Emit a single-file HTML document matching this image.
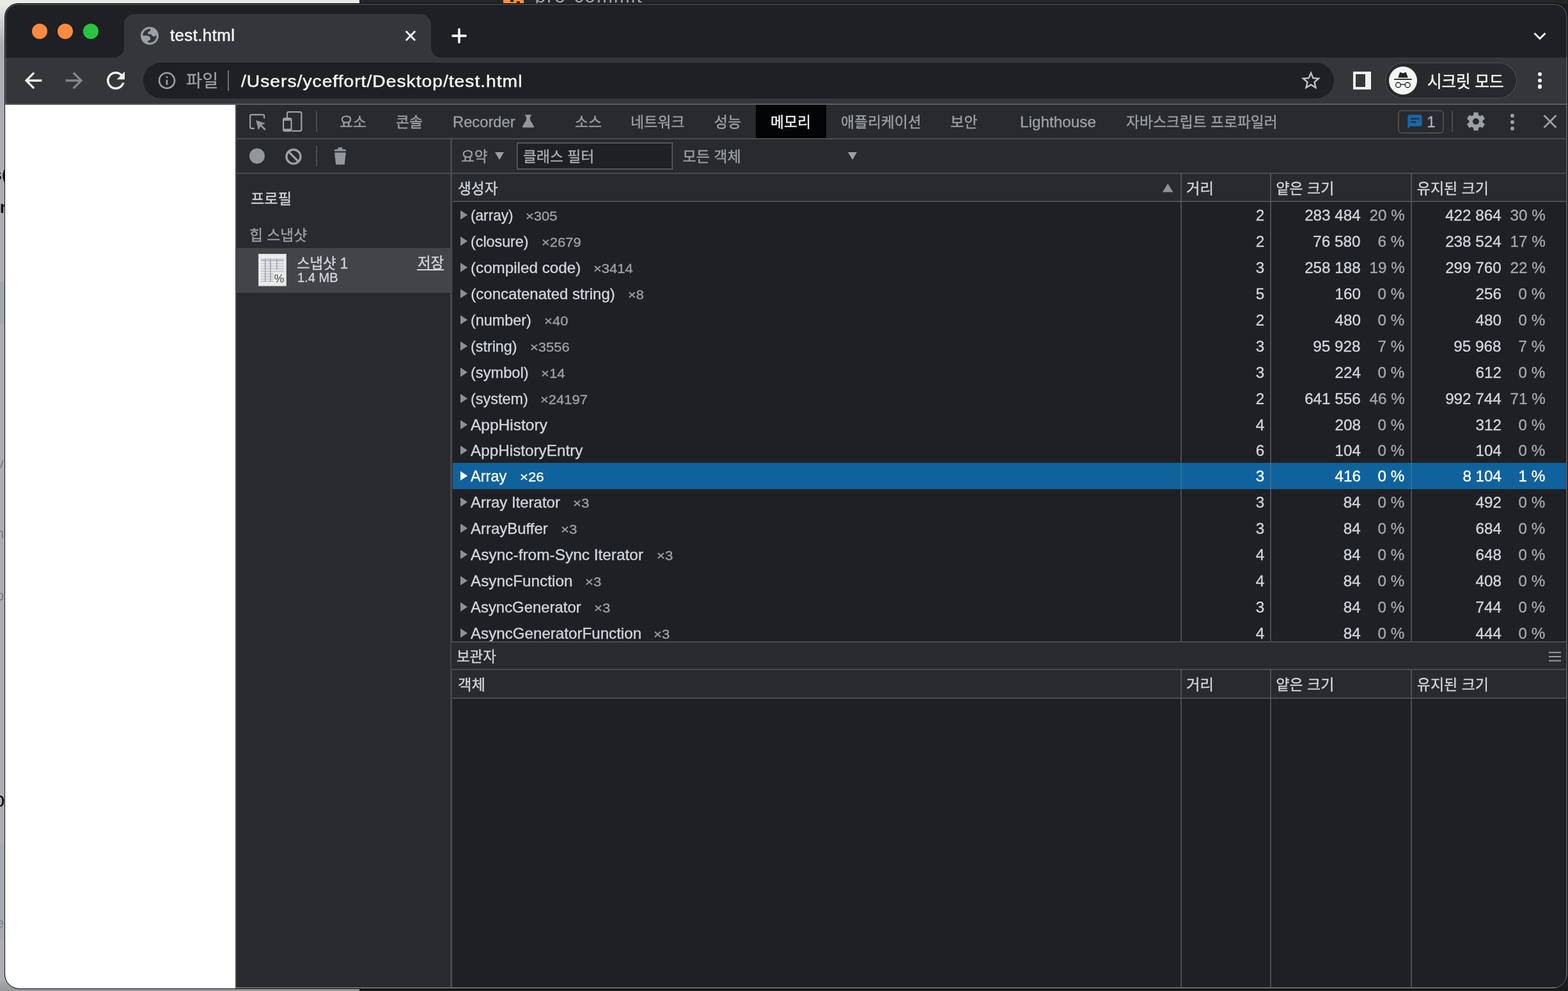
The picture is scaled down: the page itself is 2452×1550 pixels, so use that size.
<!DOCTYPE html>
<html lang="ko"><head><meta charset="utf-8"><title>test.html</title>
<style>
html,body{margin:0;padding:0}
body{width:2452px;height:1550px;overflow:hidden;position:relative;background:#1c1c1f;font-family:"Liberation Sans","Noto Sans CJK KR",sans-serif}
#bg,#win,#o,#rim{position:absolute}
#bg{left:0;top:0;width:2452px;height:1550px;overflow:hidden;will-change:transform}
#bg div,#bg span{position:absolute}
#win{left:8px;top:6px;width:2443px;height:1540px;border-radius:20px 20px 22px 22px;overflow:hidden;background:#1f2024}
#rim{left:7px;top:5px;width:2443px;height:1540px;border-radius:21px 21px 23px 23px;border:1px solid #0c0c0d;pointer-events:none;box-shadow:inset 0 0 0 1.5px rgba(255,255,255,.2)}
#o{left:-8px;top:-6px;width:2452px;height:1550px;will-change:transform}
#o>div,#o>svg,#o>span{position:absolute}
#o>svg{overflow:visible}
.t{white-space:nowrap;-webkit-text-stroke-width:.35px;line-height:40px;transform-origin:0 50%;font-family:"Liberation Sans","Noto Sans CJK KR",sans-serif}
</style></head>
<body>
<div id="bg">
<div style="left:0px;top:0px;width:562px;height:1550px;background:#e9e9e6;"></div>
<div style="left:0px;top:70px;width:40px;height:1480px;background:#adaeb1;"></div>
<div style="left:0px;top:4px;width:40px;height:66px;background:linear-gradient(180deg,#ecece9,#d2d3d4 40%,#adaeb1);"></div>
<div style="left:0px;top:440px;width:8px;height:66px;background:#a3a6ad;"></div>
<div style="left:0px;top:1320px;width:8px;height:150px;background:#a6a9b1;"></div>
<div style="left:0px;top:1530px;width:60px;height:20px;background:linear-gradient(180deg,#adaeb1,#97989b);"></div>
<div style="left:0px;top:1546px;width:562px;height:4px;background:#999a9d;"></div>
<div style="left:562px;top:0px;width:1890px;height:6px;background:#242528;"></div>
<div style="left:562px;top:1546px;width:1890px;height:4px;background:#1a1a1c;"></div>
<span style="left:-11.5px;top:253.0px;font-size:26px;line-height:40px;color:#111;white-space:nowrap;font-weight:bold;">s(</span>
<span style="left:-7.5px;top:304.0px;font-size:26px;line-height:40px;color:#111;white-space:nowrap;font-weight:bold;">ir</span>
<span style="left:-5px;top:705.4px;font-size:22px;line-height:40px;color:#7b7d82;white-space:nowrap;">v</span>
<span style="left:-6px;top:815.4px;font-size:22px;line-height:40px;color:#7b7d82;white-space:nowrap;">n</span>
<span style="left:-6px;top:912.4px;font-size:22px;line-height:40px;color:#7b7d82;white-space:nowrap;">p</span>
<span style="left:-11px;top:1230.2px;font-size:34px;line-height:40px;color:#111;white-space:nowrap;">o</span>
<span style="left:-6px;top:1424.4px;font-size:22px;line-height:40px;color:#84868c;white-space:nowrap;">e</span>
<div style="left:787px;top:0px;width:32px;height:5px;background:#ff8f33;"></div>
<div style="left:798px;top:0px;width:5px;height:3px;background:#242528;"></div>
<div style="left:808px;top:2px;width:5px;height:3px;background:#242528;"></div>
<span style="left:836.5px;top:-25.8px;font-size:30px;line-height:40px;color:#a3a6ab;white-space:nowrap;letter-spacing:1.9px;">pre-commit</span>
</div>
<div id="win"><div id="o">
<div style="left:0px;top:0px;width:2452px;height:90px;background:#1f2024;"></div>
<div style="left:50px;top:37px;width:24px;height:24px;background:#fc8b3f;border-radius:50%"></div>
<div style="left:90px;top:37px;width:24px;height:24px;background:#fc8b3f;border-radius:50%"></div>
<div style="left:130px;top:37px;width:24px;height:24px;background:#29c540;border-radius:50%"></div>
<svg style="left:0px;top:0px;" width="2452" height="90" viewBox="0 0 2452 90"><path d="M178 90A16 16 0 0 0 194 74V38A16 16 0 0 1 210 22H658A16 16 0 0 1 674 38V74A16 16 0 0 0 690 90Z" fill="#35363a"/></svg>
<svg style="left:220px;top:42px;" width="28" height="28" viewBox="0 0 28 28"><defs><clipPath id="gc"><circle cx="14" cy="14" r="13"/></clipPath></defs><circle cx="14" cy="14" r="12.4" fill="none" stroke="#9aa0a8" stroke-width="3.2"/><g clip-path="url(#gc)" fill="#9aa0a8"><path d="M15.8 1.5L15.2 5.4Q14.6 7 12.6 7.6Q11 8.6 11.1 10.2Q11.3 11.5 12.8 11.5H15.8Q17 11.6 17.4 13Q18 14.9 20.6 14.9Q23.4 14.8 25 12.6L28 10V0Z"/><path d="M0 13.7H10.6Q12.6 13.9 14 15.6Q15.4 17.6 15.2 19.4Q15 20.6 13.4 21Q11 21.4 10.9 22.8Q11.2 24.2 13.4 25.6L14 28H0Z"/></g></svg>
<span class="t" style="top:35px;font-size:25px;color:#f1f3f4;-webkit-text-stroke-width:.5px;letter-spacing:0.4px;left:266.4px;transform:scaleX(1.0330);">test.html</span>
<svg style="left:632px;top:46px;" width="20" height="20" viewBox="0 0 20 20"><path d="M2.8 2.8L17.2 17.2M17.2 2.8L2.8 17.2" stroke="#f1f3f4" stroke-width="2.9" fill="none"/></svg>
<svg style="left:704px;top:42px;" width="28" height="28" viewBox="0 0 28 28"><path d="M14 4V24M4 14H24" stroke="#f1f3f4" stroke-width="3.8" stroke-linecap="round" fill="none"/></svg>
<svg style="left:2396px;top:49px;" width="24" height="16" viewBox="0 0 24 16"><path d="M3.5 3L12 11.5L20.5 3" stroke="#f1f3f4" stroke-width="3" fill="none"/></svg>
<div style="left:0px;top:90px;width:2452px;height:72px;background:#35363a;"></div>
<div style="left:0px;top:162px;width:2452px;height:2px;background:#5a5c60;"></div>
<svg style="left:32px;top:106px;" width="40" height="40" viewBox="0 0 24 24"><path fill="#f1f3f4" d="M20 11H7.83l5.59-5.59L12 4l-8 8 8 8 1.41-1.41L7.83 13H20v-2z"/></svg>
<svg style="left:96px;top:106px;" width="40" height="40" viewBox="0 0 24 24"><path fill="#84878b" d="M12 4l-1.41 1.41L16.17 11H4v2h12.17l-5.58 5.59L12 20l8-8z"/></svg>
<svg style="left:160px;top:105px;" width="42" height="42" viewBox="0 0 24 24"><path fill="#f1f3f4" d="M17.65 6.35C16.2 4.9 14.21 4 12 4c-4.42 0-7.99 3.58-7.99 8s3.57 8 7.99 8c3.73 0 6.84-2.55 7.73-6h-2.08c-.82 2.33-3.04 4-5.65 4-3.31 0-6-2.69-6-6s2.69-6 6-6c1.66 0 3.14.69 4.22 1.78L13 11h7V4l-2.35 2.35z"/></svg>
<div style="left:224px;top:98px;width:1862px;height:56px;background:#1f2023;border-radius:28px"></div>
<svg style="left:244.6px;top:110.3px;" width="32" height="32" viewBox="0 0 24 24"><path fill="#9aa0a6" d="M11 7h2v2h-2zm0 4h2v6h-2zm1-9C6.48 2 2 6.48 2 12s4.48 10 10 10 10-4.48 10-10S17.52 2 12 2zm0 18c-4.41 0-8-3.59-8-8s3.59-8 8-8 8 3.59 8 8-3.59 8-8 8z"/></svg>
<span class="t" style="top:107px;font-size:27.5px;color:#9aa0a6;left:291.01px;transform:scaleX(0.9935);">파일</span>
<div style="left:356px;top:110px;width:2px;height:32px;background:#6a6d71;"></div>
<span class="t" style="top:107px;font-size:26.5px;color:#f1f3f4;-webkit-text-stroke-width:.5px;letter-spacing:0.9px;left:376.5px;transform:scaleX(1.0686);">/Users/yceffort/Desktop/test.html</span>
<svg style="left:2031.7px;top:108px;" width="36" height="36" viewBox="0 0 24 24"><path fill="#bdc3c9" d="M22 9.24l-7.19-.62L12 2 9.19 8.63 2 9.24l5.46 4.73L5.82 21 12 17.27 18.18 21l-1.63-7.03L22 9.24zM12 15.4l-3.76 2.27 1-4.28-3.32-2.88 4.38-.38L12 6.1l1.71 4.04 4.38.38-3.32 2.88 1 4.28L12 15.4z"/></svg>
<div style="left:2116px;top:112px;width:28px;height:28px;background:#f1f3f4;"></div>
<div style="left:2120px;top:116px;width:15px;height:20px;background:#35363a;"></div>
<div style="left:2167px;top:99px;width:204px;height:54px;background:#28292c;border-radius:27px;box-shadow:0 0 0 1px rgba(255,255,255,.13)"></div>
<div style="left:2172px;top:104px;width:44px;height:44px;background:#f4f5f5;border-radius:50%"></div>
<svg style="left:2172px;top:104px;" width="44" height="44" viewBox="0 0 44 44"><path fill="#222326" d="M14.2 17.6L17 9.6Q17.3 8.9 18 9.1L20.4 9.9Q22 10.4 23.6 9.9L26 9.1Q26.7 8.9 27 9.6L29.8 17.6Z"/><rect x="8.2" y="19.2" width="27.5" height="1.8" fill="#222326"/><g fill="none" stroke="#222326" stroke-width="1.4"><circle cx="14.5" cy="28.9" r="3.9"/><circle cx="29.2" cy="28.9" r="3.9"/><path d="M18.3 28.1H25.4"/></g></svg>
<span class="t" style="top:108px;font-size:26.5px;color:#f4f5f6;-webkit-text-stroke-width:.5px;left:2231.88px;transform:scaleX(0.9243);">시크릿 모드</span>
<div style="left:2404.6px;top:112.9px;width:6.2px;height:6.2px;background:#f1f3f4;border-radius:50%"></div>
<div style="left:2404.6px;top:122.7px;width:6.2px;height:6.2px;background:#f1f3f4;border-radius:50%"></div>
<div style="left:2404.6px;top:132.4px;width:6.2px;height:6.2px;background:#f1f3f4;border-radius:50%"></div>
<div style="left:0px;top:164px;width:368px;height:1400px;background:#ffffff;"></div>
<div style="left:368px;top:164px;width:2100px;height:1400px;background:#292a2d;"></div>
<div style="left:368px;top:164px;width:2px;height:1400px;background:#494c50;"></div>
<div style="left:370px;top:216px;width:2100px;height:2px;background:#494c50;"></div>
<div style="left:370px;top:270px;width:2100px;height:2px;background:#494c50;"></div>
<div style="left:704px;top:218px;width:3px;height:1400px;background:#46484c;"></div>
<svg style="left:389px;top:177px;" width="28" height="28" viewBox="0 0 28 28"><path d="M9 23.8H4.4Q2.2 23.8 2.2 21.6V4.6Q2.2 2.4 4.4 2.4H22Q24.2 2.4 24.2 4.6V8.4" fill="none" stroke="#9aa0a6" stroke-width="2.2"/><path d="M11.2 11L26 16L20.4 18.6L26.8 25L24.8 27L18.4 20.6L15.2 26.4Z" fill="#92979d"/></svg>
<svg style="left:441px;top:173px;" width="32" height="34" viewBox="0 0 32 34"><path d="M8 11.8V4.6Q8 2.2 10.4 2.2H28Q30.4 2.2 30.4 4.6V29.4Q30.4 31.8 28 31.8H15.6" fill="none" stroke="#9aa0a6" stroke-width="2.2"/><rect x="2.1" y="12.1" width="12.4" height="19.8" rx="2" fill="none" stroke="#9aa0a6" stroke-width="2.2"/><rect x="2.1" y="12.1" width="12.4" height="3.6" rx="1" fill="#9aa0a6"/><rect x="2.1" y="28.4" width="12.4" height="3.5" fill="#9aa0a6"/></svg>
<div style="left:494px;top:174px;width:2px;height:32px;background:#494c50;"></div>
<span class="t" style="top:171px;font-size:23px;color:#9aa0a6;left:531px;transform:scaleX(0.9958);">요소</span>
<span class="t" style="top:171px;font-size:23px;color:#9aa0a6;left:619px;transform:scaleX(0.9958);">콘솔</span>
<span class="t" style="top:171px;font-size:24px;color:#9aa0a6;left:707.61px;transform:scaleX(0.9885);">Recorder</span>
<svg style="left:816px;top:179px;" width="20" height="21" viewBox="0 0 20 21"><path d="M5.2 0.6H14.8V3H12.9V8.6L19 18.4Q19.6 20.2 17.6 20.4H2.4Q0.4 20.2 1 18.4L7.1 8.6V3H5.2Z" fill="#92979d"/></svg>
<span class="t" style="top:171px;font-size:23px;color:#9aa0a6;left:899px;transform:scaleX(0.9958);">소스</span>
<span class="t" style="top:171px;font-size:23px;color:#9aa0a6;left:986px;">네트워크</span>
<span class="t" style="top:171px;font-size:23px;color:#9aa0a6;left:1116.8px;">성능</span>
<div style="left:1182px;top:164px;width:110px;height:52px;background:#030405;"></div>
<span class="t" style="top:171px;font-size:23px;color:#f1f3f4;left:1204.81px;transform:scaleX(0.9913);">메모리</span>
<span class="t" style="top:171px;font-size:23px;color:#9aa0a6;left:1314.81px;transform:scaleX(0.9902);">애플리케이션</span>
<span class="t" style="top:171px;font-size:23px;color:#9aa0a6;left:1486.3px;">보안</span>
<span class="t" style="top:171px;font-size:24px;color:#9aa0a6;left:1594.79px;transform:scaleX(1.0130);">Lighthouse</span>
<span class="t" style="top:171px;font-size:23px;color:#9aa0a6;left:1760.6px;transform:scaleX(0.9899);">자바스크립트 프로파일러</span>
<div style="left:2186px;top:172px;width:72px;height:37px;background:transparent;box-sizing:border-box;border:2px solid #494c50;border-radius:6px"></div>
<svg style="left:2200.6px;top:178.6px;" width="23" height="23" viewBox="0 0 23 23"><path d="M0.4 22.6V3.4Q0.4 0.4 3.4 0.4H19.6Q22.6 0.4 22.6 3.4V15.6Q22.6 18.6 19.6 18.6H4.4Z" fill="#1a67a6"/><rect x="5" y="5.6" width="13.4" height="2.2" fill="#292a2d"/><rect x="5" y="10.6" width="8.6" height="2.2" fill="#292a2d"/></svg>
<span class="t" style="top:171px;font-size:24px;color:#aeb2b8;left:2231.2px;">1</span>
<div style="left:2270px;top:174px;width:2px;height:32px;background:#494c50;"></div>
<svg style="left:2291px;top:173px;" width="34" height="34" viewBox="0 0 24 24"><path fill="#9aa0a6" d="M19.43 12.98c.04-.32.07-.64.07-.98s-.03-.66-.07-.98l2.11-1.65c.19-.15.24-.42.12-.64l-2-3.46c-.12-.22-.39-.3-.61-.22l-2.49 1c-.52-.4-1.08-.73-1.69-.98l-.38-2.65C14.46 2.18 14.25 2 14 2h-4c-.25 0-.46.18-.49.42l-.38 2.65c-.61.25-1.17.59-1.69.98l-2.49-1c-.23-.09-.49 0-.61.22l-2 3.46c-.13.22-.07.49.12.64l2.11 1.65c-.04.32-.07.65-.07.98s.03.66.07.98l-2.11 1.65c-.19.15-.24.42-.12.64l2 3.46c.12.22.39.3.61.22l2.49-1c.52.4 1.08.73 1.69.98l.38 2.65c.03.24.24.42.49.42h4c.25 0 .46-.18.49-.42l.38-2.65c.61-.25 1.17-.59 1.69-.98l2.49 1c.23.09.49 0 .61-.22l2-3.46c.12-.22.07-.49-.12-.64l-2.11-1.65zM12 15.5c-1.93 0-3.5-1.57-3.5-3.5s1.57-3.5 3.5-3.5 3.5 1.57 3.5 3.5-1.57 3.5-3.5 3.5z"/></svg>
<div style="left:2361.8px;top:177.8px;width:6.4px;height:6.4px;background:#9aa0a6;border-radius:50%"></div>
<div style="left:2361.8px;top:187.8px;width:6.4px;height:6.4px;background:#9aa0a6;border-radius:50%"></div>
<div style="left:2361.8px;top:197.8px;width:6.4px;height:6.4px;background:#9aa0a6;border-radius:50%"></div>
<svg style="left:2413px;top:179px;" width="22" height="22" viewBox="0 0 22 22"><path d="M1.6 1.6L20.4 20.4M20.4 1.6L1.6 20.4" stroke="#9aa0a6" stroke-width="2.8" fill="none"/></svg>
<div style="left:390px;top:232px;width:24px;height:24px;background:#92979d;border-radius:50%"></div>
<svg style="left:445.8px;top:232px;" width="26" height="26" viewBox="0 0 26 26"><circle cx="13" cy="13" r="11" fill="none" stroke="#9aa0a6" stroke-width="3.4"/><path d="M5.4 5.4L20.6 20.6" stroke="#9aa0a6" stroke-width="3.4"/></svg>
<div style="left:494px;top:228px;width:2px;height:32px;background:#494c50;"></div>
<svg style="left:522px;top:230px;" width="20" height="28" viewBox="0 0 20 28"><path d="M0.8 6.6V5.6Q1 3.6 3 3.4H6.6V1.2Q6.8 0.4 7.6 0.4H12.4Q13.2 0.4 13.4 1.2V3.4H17Q19 3.6 19.2 5.6V6.6Z" fill="#92979d"/><path d="M1.2 8.6H18.8L16.8 27.6H3.2Z" fill="#92979d"/></svg>
<span class="t" style="top:225px;font-size:23px;color:#9aa0a6;left:721.41px;transform:scaleX(0.9862);">요약</span>
<svg style="left:774px;top:238px;" width="14" height="12" viewBox="0 0 14 12"><path d="M0 0H14L7 12Z" fill="#9aa0a6"/></svg>
<svg style="left:808px;top:223px;" width="244" height="42" viewBox="0 0 244 42"><rect x="0.7" y="0.7" width="242.6" height="40.6" fill="#1f2024" stroke="#63666b" stroke-width="1.4"/></svg>
<span class="t" style="top:225px;font-size:23px;color:#a9aeb4;left:817.71px;transform:scaleX(0.9904);">클래스 필터</span>
<span class="t" style="top:225px;font-size:23px;color:#9aa0a6;left:1067.6px;">모든 객체</span>
<svg style="left:1326px;top:238px;" width="14" height="12" viewBox="0 0 14 12"><path d="M0 0H14L7 12Z" fill="#9aa0a6"/></svg>
<span class="t" style="top:291px;font-size:23px;color:#d0d5dd;left:391.59px;transform:scaleX(1.0079);">프로필</span>
<span class="t" style="top:348px;font-size:23px;color:#9aa0a6;left:389.61px;transform:scaleX(0.9903);">힙 스냅샷</span>
<div style="left:370px;top:388px;width:334px;height:70px;background:#434448;"></div>
<svg style="left:404px;top:397.4px;" width="44" height="50.6" viewBox="0 0 44 50.6"><rect x="0" y="0" width="44" height="50.6" fill="#c9ced8"/><rect x="0.8" y="0.8" width="42" height="48.8" fill="#ecece8"/><rect x="4" y="7.6" width="36" height="4.4" fill="#bcc4d3"/><g stroke="#bcc4d3" stroke-width="1.7"><path d="M4 15.5H40M4 19.5H40M4 23.4H40M4 27.4H40M4 31.4H24M4 35.4H24M4 39.4H24M4 43.2H24"/></g><g stroke="#a4a8ae" stroke-width="1.8"><path d="M10.8 7.4V44M18.9 7.4V44M28.8 7.4V25"/></g><text x="24.6" y="45" font-family="Liberation Sans,sans-serif" font-size="18" font-weight="bold" fill="#75777b">%</text></svg>
<span class="t" style="top:392px;font-size:23px;color:#d0d5dd;left:463.63px;transform:scaleX(0.9693);">스냅샷 1</span>
<span class="t" style="top:414px;font-size:20px;color:#d0d5dd;left:464.59px;transform:scaleX(1.0061);">1.4 MB</span>
<span class="t" style="top:391px;font-size:23px;color:#d0d5dd;left:652.6px;transform:scaleX(0.9747);">저장</span>
<div style="left:652px;top:421.4px;width:42.4px;height:2px;background:#d0d5dd;"></div>
<div style="left:708px;top:272px;width:1800px;height:42px;background:#292a2d;"></div>
<div style="left:708px;top:316px;width:1800px;height:690px;background:#1f2024;"></div>
<svg style="left:719.8px;top:329.09999999999997px;" width="11.2" height="14.6" viewBox="0 0 11.2 14.6"><path d="M0 0L11.2 7.3L0 14.6Z" fill="#8c8f94"/></svg>
<span class="t" style="top:317px;font-size:24px;color:#d0d5dd;left:736.36px;transform:scaleX(0.9421);">(array)</span>
<span class="t" style="top:318px;font-size:20.5px;color:#9aa0a6;left:822.23px;transform:scaleX(1.0718);">×305</span>
<span class="t" style="top:317px;font-size:24px;color:#d0d5dd;right:474.85px;transform-origin:100% 50%;transform:scaleX(1.0100);">2</span>
<span class="t" style="top:317px;font-size:24px;color:#d0d5dd;right:324.35px;transform-origin:100% 50%;transform:scaleX(1.0100);">283 484</span>
<span class="t" style="top:317px;font-size:24px;color:#a4a8ae;right:255.36px;transform-origin:100% 50%;transform:scaleX(1.0100);">20 %</span>
<span class="t" style="top:317px;font-size:24px;color:#d0d5dd;right:104.25px;transform-origin:100% 50%;transform:scaleX(1.0100);">422 864</span>
<span class="t" style="top:317px;font-size:24px;color:#a4a8ae;right:35.36px;transform-origin:100% 50%;transform:scaleX(1.0100);">30 %</span>
<svg style="left:719.8px;top:370.09999999999997px;" width="11.2" height="14.6" viewBox="0 0 11.2 14.6"><path d="M0 0L11.2 7.3L0 14.6Z" fill="#8c8f94"/></svg>
<span class="t" style="top:358px;font-size:24px;color:#d0d5dd;left:736.33px;transform:scaleX(0.9697);">(closure)</span>
<span class="t" style="top:359px;font-size:20.5px;color:#9aa0a6;left:846.63px;transform:scaleX(1.0716);">×2679</span>
<span class="t" style="top:358px;font-size:24px;color:#d0d5dd;right:474.85px;transform-origin:100% 50%;transform:scaleX(1.0100);">2</span>
<span class="t" style="top:358px;font-size:24px;color:#d0d5dd;right:324.35px;transform-origin:100% 50%;transform:scaleX(1.0100);">76 580</span>
<span class="t" style="top:358px;font-size:24px;color:#a4a8ae;right:255.36px;transform-origin:100% 50%;transform:scaleX(1.0100);">6 %</span>
<span class="t" style="top:358px;font-size:24px;color:#d0d5dd;right:104.25px;transform-origin:100% 50%;transform:scaleX(1.0100);">238 524</span>
<span class="t" style="top:358px;font-size:24px;color:#a4a8ae;right:35.36px;transform-origin:100% 50%;transform:scaleX(1.0100);">17 %</span>
<svg style="left:719.8px;top:411.09999999999997px;" width="11.2" height="14.6" viewBox="0 0 11.2 14.6"><path d="M0 0L11.2 7.3L0 14.6Z" fill="#8c8f94"/></svg>
<span class="t" style="top:399px;font-size:24px;color:#d0d5dd;left:736.29px;transform:scaleX(1.0085);">(compiled code)</span>
<span class="t" style="top:400px;font-size:20.5px;color:#9aa0a6;left:928.13px;transform:scaleX(1.0734);">×3414</span>
<span class="t" style="top:399px;font-size:24px;color:#d0d5dd;right:474.85px;transform-origin:100% 50%;transform:scaleX(1.0100);">3</span>
<span class="t" style="top:399px;font-size:24px;color:#d0d5dd;right:324.35px;transform-origin:100% 50%;transform:scaleX(1.0100);">258 188</span>
<span class="t" style="top:399px;font-size:24px;color:#a4a8ae;right:255.36px;transform-origin:100% 50%;transform:scaleX(1.0100);">19 %</span>
<span class="t" style="top:399px;font-size:24px;color:#d0d5dd;right:104.25px;transform-origin:100% 50%;transform:scaleX(1.0100);">299 760</span>
<span class="t" style="top:399px;font-size:24px;color:#a4a8ae;right:35.36px;transform-origin:100% 50%;transform:scaleX(1.0100);">22 %</span>
<svg style="left:719.8px;top:452.09999999999997px;" width="11.2" height="14.6" viewBox="0 0 11.2 14.6"><path d="M0 0L11.2 7.3L0 14.6Z" fill="#8c8f94"/></svg>
<span class="t" style="top:440px;font-size:24px;color:#d0d5dd;left:736.3px;">(concatenated string)</span>
<span class="t" style="top:441px;font-size:20.5px;color:#9aa0a6;left:982.44px;transform:scaleX(1.0649);">×8</span>
<span class="t" style="top:440px;font-size:24px;color:#d0d5dd;right:474.85px;transform-origin:100% 50%;transform:scaleX(1.0100);">5</span>
<span class="t" style="top:440px;font-size:24px;color:#d0d5dd;right:324.35px;transform-origin:100% 50%;transform:scaleX(1.0100);">160</span>
<span class="t" style="top:440px;font-size:24px;color:#a4a8ae;right:255.36px;transform-origin:100% 50%;transform:scaleX(1.0100);">0 %</span>
<span class="t" style="top:440px;font-size:24px;color:#d0d5dd;right:104.25px;transform-origin:100% 50%;transform:scaleX(1.0100);">256</span>
<span class="t" style="top:440px;font-size:24px;color:#a4a8ae;right:35.36px;transform-origin:100% 50%;transform:scaleX(1.0100);">0 %</span>
<svg style="left:719.8px;top:493.09999999999997px;" width="11.2" height="14.6" viewBox="0 0 11.2 14.6"><path d="M0 0L11.2 7.3L0 14.6Z" fill="#8c8f94"/></svg>
<span class="t" style="top:481px;font-size:24px;color:#d0d5dd;left:736.33px;transform:scaleX(0.9731);">(number)</span>
<span class="t" style="top:482px;font-size:20.5px;color:#9aa0a6;left:850.92px;transform:scaleX(1.0755);">×40</span>
<span class="t" style="top:481px;font-size:24px;color:#d0d5dd;right:474.85px;transform-origin:100% 50%;transform:scaleX(1.0100);">2</span>
<span class="t" style="top:481px;font-size:24px;color:#d0d5dd;right:324.35px;transform-origin:100% 50%;transform:scaleX(1.0100);">480</span>
<span class="t" style="top:481px;font-size:24px;color:#a4a8ae;right:255.36px;transform-origin:100% 50%;transform:scaleX(1.0100);">0 %</span>
<span class="t" style="top:481px;font-size:24px;color:#d0d5dd;right:104.25px;transform-origin:100% 50%;transform:scaleX(1.0100);">480</span>
<span class="t" style="top:481px;font-size:24px;color:#a4a8ae;right:35.36px;transform-origin:100% 50%;transform:scaleX(1.0100);">0 %</span>
<svg style="left:719.8px;top:534.1px;" width="11.2" height="14.6" viewBox="0 0 11.2 14.6"><path d="M0 0L11.2 7.3L0 14.6Z" fill="#8c8f94"/></svg>
<span class="t" style="top:522px;font-size:24px;color:#d0d5dd;left:736.33px;transform:scaleX(0.9714);">(string)</span>
<span class="t" style="top:523px;font-size:20.5px;color:#9aa0a6;left:828.73px;transform:scaleX(1.0698);">×3556</span>
<span class="t" style="top:522px;font-size:24px;color:#d0d5dd;right:474.85px;transform-origin:100% 50%;transform:scaleX(1.0100);">3</span>
<span class="t" style="top:522px;font-size:24px;color:#d0d5dd;right:324.35px;transform-origin:100% 50%;transform:scaleX(1.0100);">95 928</span>
<span class="t" style="top:522px;font-size:24px;color:#a4a8ae;right:255.36px;transform-origin:100% 50%;transform:scaleX(1.0100);">7 %</span>
<span class="t" style="top:522px;font-size:24px;color:#d0d5dd;right:104.25px;transform-origin:100% 50%;transform:scaleX(1.0100);">95 968</span>
<span class="t" style="top:522px;font-size:24px;color:#a4a8ae;right:35.36px;transform-origin:100% 50%;transform:scaleX(1.0100);">7 %</span>
<svg style="left:719.8px;top:575.1px;" width="11.2" height="14.6" viewBox="0 0 11.2 14.6"><path d="M0 0L11.2 7.3L0 14.6Z" fill="#8c8f94"/></svg>
<span class="t" style="top:563px;font-size:24px;color:#d0d5dd;left:736.32px;transform:scaleX(0.9842);">(symbol)</span>
<span class="t" style="top:564px;font-size:20.5px;color:#9aa0a6;left:846.12px;transform:scaleX(1.0815);">×14</span>
<span class="t" style="top:563px;font-size:24px;color:#d0d5dd;right:474.85px;transform-origin:100% 50%;transform:scaleX(1.0100);">3</span>
<span class="t" style="top:563px;font-size:24px;color:#d0d5dd;right:324.35px;transform-origin:100% 50%;transform:scaleX(1.0100);">224</span>
<span class="t" style="top:563px;font-size:24px;color:#a4a8ae;right:255.36px;transform-origin:100% 50%;transform:scaleX(1.0100);">0 %</span>
<span class="t" style="top:563px;font-size:24px;color:#d0d5dd;right:104.25px;transform-origin:100% 50%;transform:scaleX(1.0100);">612</span>
<span class="t" style="top:563px;font-size:24px;color:#a4a8ae;right:35.36px;transform-origin:100% 50%;transform:scaleX(1.0100);">0 %</span>
<svg style="left:719.8px;top:616.1px;" width="11.2" height="14.6" viewBox="0 0 11.2 14.6"><path d="M0 0L11.2 7.3L0 14.6Z" fill="#8c8f94"/></svg>
<span class="t" style="top:604px;font-size:24px;color:#d0d5dd;left:736.32px;transform:scaleX(0.9766);">(system)</span>
<span class="t" style="top:605px;font-size:20.5px;color:#9aa0a6;left:845.43px;transform:scaleX(1.0742);">×24197</span>
<span class="t" style="top:604px;font-size:24px;color:#d0d5dd;right:474.85px;transform-origin:100% 50%;transform:scaleX(1.0100);">2</span>
<span class="t" style="top:604px;font-size:24px;color:#d0d5dd;right:324.35px;transform-origin:100% 50%;transform:scaleX(1.0100);">641 556</span>
<span class="t" style="top:604px;font-size:24px;color:#a4a8ae;right:255.36px;transform-origin:100% 50%;transform:scaleX(1.0100);">46 %</span>
<span class="t" style="top:604px;font-size:24px;color:#d0d5dd;right:104.25px;transform-origin:100% 50%;transform:scaleX(1.0100);">992 744</span>
<span class="t" style="top:604px;font-size:24px;color:#a4a8ae;right:35.36px;transform-origin:100% 50%;transform:scaleX(1.0100);">71 %</span>
<svg style="left:719.8px;top:657.1px;" width="11.2" height="14.6" viewBox="0 0 11.2 14.6"><path d="M0 0L11.2 7.3L0 14.6Z" fill="#8c8f94"/></svg>
<span class="t" style="top:645px;font-size:24px;color:#d0d5dd;left:735.9px;transform:scaleX(1.0215);">AppHistory</span>
<span class="t" style="top:645px;font-size:24px;color:#d0d5dd;right:474.85px;transform-origin:100% 50%;transform:scaleX(1.0100);">4</span>
<span class="t" style="top:645px;font-size:24px;color:#d0d5dd;right:324.35px;transform-origin:100% 50%;transform:scaleX(1.0100);">208</span>
<span class="t" style="top:645px;font-size:24px;color:#a4a8ae;right:255.36px;transform-origin:100% 50%;transform:scaleX(1.0100);">0 %</span>
<span class="t" style="top:645px;font-size:24px;color:#d0d5dd;right:104.25px;transform-origin:100% 50%;transform:scaleX(1.0100);">312</span>
<span class="t" style="top:645px;font-size:24px;color:#a4a8ae;right:35.36px;transform-origin:100% 50%;transform:scaleX(1.0100);">0 %</span>
<svg style="left:719.8px;top:697.1px;" width="11.2" height="14.6" viewBox="0 0 11.2 14.6"><path d="M0 0L11.2 7.3L0 14.6Z" fill="#8c8f94"/></svg>
<span class="t" style="top:685px;font-size:24px;color:#d0d5dd;left:735.9px;transform:scaleX(1.0116);">AppHistoryEntry</span>
<span class="t" style="top:685px;font-size:24px;color:#d0d5dd;right:474.85px;transform-origin:100% 50%;transform:scaleX(1.0100);">6</span>
<span class="t" style="top:685px;font-size:24px;color:#d0d5dd;right:324.35px;transform-origin:100% 50%;transform:scaleX(1.0100);">104</span>
<span class="t" style="top:685px;font-size:24px;color:#a4a8ae;right:255.36px;transform-origin:100% 50%;transform:scaleX(1.0100);">0 %</span>
<span class="t" style="top:685px;font-size:24px;color:#d0d5dd;right:104.25px;transform-origin:100% 50%;transform:scaleX(1.0100);">104</span>
<span class="t" style="top:685px;font-size:24px;color:#a4a8ae;right:35.36px;transform-origin:100% 50%;transform:scaleX(1.0100);">0 %</span>
<div style="left:708px;top:724px;width:1800px;height:41px;background:#10629d;"></div>
<svg style="left:719.8px;top:737.1px;" width="11.2" height="14.6" viewBox="0 0 11.2 14.6"><path d="M0 0L11.2 7.3L0 14.6Z" fill="#ffffff"/></svg>
<span class="t" style="top:725px;font-size:24px;color:#ffffff;left:735.9px;transform:scaleX(0.9818);">Array</span>
<span class="t" style="top:726px;font-size:20.5px;color:#ffffff;left:812.52px;transform:scaleX(1.0845);">×26</span>
<span class="t" style="top:725px;font-size:24px;color:#ffffff;right:474.85px;transform-origin:100% 50%;transform:scaleX(1.0100);">3</span>
<span class="t" style="top:725px;font-size:24px;color:#ffffff;right:324.35px;transform-origin:100% 50%;transform:scaleX(1.0100);">416</span>
<span class="t" style="top:725px;font-size:24px;color:#ffffff;right:255.36px;transform-origin:100% 50%;transform:scaleX(1.0100);">0 %</span>
<span class="t" style="top:725px;font-size:24px;color:#ffffff;right:104.25px;transform-origin:100% 50%;transform:scaleX(1.0100);">8 104</span>
<span class="t" style="top:725px;font-size:24px;color:#ffffff;right:35.36px;transform-origin:100% 50%;transform:scaleX(1.0100);">1 %</span>
<svg style="left:719.8px;top:778.1px;" width="11.2" height="14.6" viewBox="0 0 11.2 14.6"><path d="M0 0L11.2 7.3L0 14.6Z" fill="#8c8f94"/></svg>
<span class="t" style="top:766px;font-size:24px;color:#d0d5dd;left:735.9px;">Array Iterator</span>
<span class="t" style="top:767px;font-size:20.5px;color:#9aa0a6;left:895.82px;transform:scaleX(1.0831);">×3</span>
<span class="t" style="top:766px;font-size:24px;color:#d0d5dd;right:474.85px;transform-origin:100% 50%;transform:scaleX(1.0100);">3</span>
<span class="t" style="top:766px;font-size:24px;color:#d0d5dd;right:324.35px;transform-origin:100% 50%;transform:scaleX(1.0100);">84</span>
<span class="t" style="top:766px;font-size:24px;color:#a4a8ae;right:255.36px;transform-origin:100% 50%;transform:scaleX(1.0100);">0 %</span>
<span class="t" style="top:766px;font-size:24px;color:#d0d5dd;right:104.25px;transform-origin:100% 50%;transform:scaleX(1.0100);">492</span>
<span class="t" style="top:766px;font-size:24px;color:#a4a8ae;right:35.36px;transform-origin:100% 50%;transform:scaleX(1.0100);">0 %</span>
<svg style="left:719.8px;top:819.1px;" width="11.2" height="14.6" viewBox="0 0 11.2 14.6"><path d="M0 0L11.2 7.3L0 14.6Z" fill="#8c8f94"/></svg>
<span class="t" style="top:807px;font-size:24px;color:#d0d5dd;left:735.9px;">ArrayBuffer</span>
<span class="t" style="top:808px;font-size:20.5px;color:#9aa0a6;left:876.92px;transform:scaleX(1.0831);">×3</span>
<span class="t" style="top:807px;font-size:24px;color:#d0d5dd;right:474.85px;transform-origin:100% 50%;transform:scaleX(1.0100);">3</span>
<span class="t" style="top:807px;font-size:24px;color:#d0d5dd;right:324.35px;transform-origin:100% 50%;transform:scaleX(1.0100);">84</span>
<span class="t" style="top:807px;font-size:24px;color:#a4a8ae;right:255.36px;transform-origin:100% 50%;transform:scaleX(1.0100);">0 %</span>
<span class="t" style="top:807px;font-size:24px;color:#d0d5dd;right:104.25px;transform-origin:100% 50%;transform:scaleX(1.0100);">684</span>
<span class="t" style="top:807px;font-size:24px;color:#a4a8ae;right:35.36px;transform-origin:100% 50%;transform:scaleX(1.0100);">0 %</span>
<svg style="left:719.8px;top:860.1px;" width="11.2" height="14.6" viewBox="0 0 11.2 14.6"><path d="M0 0L11.2 7.3L0 14.6Z" fill="#8c8f94"/></svg>
<span class="t" style="top:848px;font-size:24px;color:#d0d5dd;left:735.9px;transform:scaleX(1.0177);">Async-from-Sync Iterator</span>
<span class="t" style="top:849px;font-size:20.5px;color:#9aa0a6;left:1026.52px;transform:scaleX(1.0831);">×3</span>
<span class="t" style="top:848px;font-size:24px;color:#d0d5dd;right:474.85px;transform-origin:100% 50%;transform:scaleX(1.0100);">4</span>
<span class="t" style="top:848px;font-size:24px;color:#d0d5dd;right:324.35px;transform-origin:100% 50%;transform:scaleX(1.0100);">84</span>
<span class="t" style="top:848px;font-size:24px;color:#a4a8ae;right:255.36px;transform-origin:100% 50%;transform:scaleX(1.0100);">0 %</span>
<span class="t" style="top:848px;font-size:24px;color:#d0d5dd;right:104.25px;transform-origin:100% 50%;transform:scaleX(1.0100);">648</span>
<span class="t" style="top:848px;font-size:24px;color:#a4a8ae;right:35.36px;transform-origin:100% 50%;transform:scaleX(1.0100);">0 %</span>
<svg style="left:719.8px;top:901.1px;" width="11.2" height="14.6" viewBox="0 0 11.2 14.6"><path d="M0 0L11.2 7.3L0 14.6Z" fill="#8c8f94"/></svg>
<span class="t" style="top:889px;font-size:24px;color:#d0d5dd;left:735.9px;transform:scaleX(1.0131);">AsyncFunction</span>
<span class="t" style="top:890px;font-size:20.5px;color:#9aa0a6;left:914.52px;transform:scaleX(1.0831);">×3</span>
<span class="t" style="top:889px;font-size:24px;color:#d0d5dd;right:474.85px;transform-origin:100% 50%;transform:scaleX(1.0100);">4</span>
<span class="t" style="top:889px;font-size:24px;color:#d0d5dd;right:324.35px;transform-origin:100% 50%;transform:scaleX(1.0100);">84</span>
<span class="t" style="top:889px;font-size:24px;color:#a4a8ae;right:255.36px;transform-origin:100% 50%;transform:scaleX(1.0100);">0 %</span>
<span class="t" style="top:889px;font-size:24px;color:#d0d5dd;right:104.25px;transform-origin:100% 50%;transform:scaleX(1.0100);">408</span>
<span class="t" style="top:889px;font-size:24px;color:#a4a8ae;right:35.36px;transform-origin:100% 50%;transform:scaleX(1.0100);">0 %</span>
<svg style="left:719.8px;top:942.1px;" width="11.2" height="14.6" viewBox="0 0 11.2 14.6"><path d="M0 0L11.2 7.3L0 14.6Z" fill="#8c8f94"/></svg>
<span class="t" style="top:930px;font-size:24px;color:#d0d5dd;left:735.9px;transform:scaleX(0.9958);">AsyncGenerator</span>
<span class="t" style="top:931px;font-size:20.5px;color:#9aa0a6;left:929.12px;transform:scaleX(1.0831);">×3</span>
<span class="t" style="top:930px;font-size:24px;color:#d0d5dd;right:474.85px;transform-origin:100% 50%;transform:scaleX(1.0100);">3</span>
<span class="t" style="top:930px;font-size:24px;color:#d0d5dd;right:324.35px;transform-origin:100% 50%;transform:scaleX(1.0100);">84</span>
<span class="t" style="top:930px;font-size:24px;color:#a4a8ae;right:255.36px;transform-origin:100% 50%;transform:scaleX(1.0100);">0 %</span>
<span class="t" style="top:930px;font-size:24px;color:#d0d5dd;right:104.25px;transform-origin:100% 50%;transform:scaleX(1.0100);">744</span>
<span class="t" style="top:930px;font-size:24px;color:#a4a8ae;right:35.36px;transform-origin:100% 50%;transform:scaleX(1.0100);">0 %</span>
<svg style="left:719.8px;top:983.1px;" width="11.2" height="14.6" viewBox="0 0 11.2 14.6"><path d="M0 0L11.2 7.3L0 14.6Z" fill="#8c8f94"/></svg>
<span class="t" style="top:971px;font-size:24px;color:#d0d5dd;left:735.9px;transform:scaleX(1.0060);">AsyncGeneratorFunction</span>
<span class="t" style="top:972px;font-size:20.5px;color:#9aa0a6;left:1022.32px;transform:scaleX(1.0831);">×3</span>
<span class="t" style="top:971px;font-size:24px;color:#d0d5dd;right:474.85px;transform-origin:100% 50%;transform:scaleX(1.0100);">4</span>
<span class="t" style="top:971px;font-size:24px;color:#d0d5dd;right:324.35px;transform-origin:100% 50%;transform:scaleX(1.0100);">84</span>
<span class="t" style="top:971px;font-size:24px;color:#a4a8ae;right:255.36px;transform-origin:100% 50%;transform:scaleX(1.0100);">0 %</span>
<span class="t" style="top:971px;font-size:24px;color:#d0d5dd;right:104.25px;transform-origin:100% 50%;transform:scaleX(1.0100);">444</span>
<span class="t" style="top:971px;font-size:24px;color:#a4a8ae;right:35.36px;transform-origin:100% 50%;transform:scaleX(1.0100);">0 %</span>
<span class="t" style="top:275px;font-size:23px;color:#d0d5dd;left:715.61px;transform:scaleX(0.9852);">생성자</span>
<svg style="left:1818px;top:286.6px;" width="16.4" height="13.6" viewBox="0 0 16.4 13.6"><path d="M0 13.6H16.4L8.2 0Z" fill="#8f9297"/></svg>
<span class="t" style="top:275px;font-size:23px;color:#d0d5dd;left:1854.98px;transform:scaleX(1.0161);">거리</span>
<span class="t" style="top:275px;font-size:23px;color:#d0d5dd;left:1995.3px;">얕은 크기</span>
<span class="t" style="top:275px;font-size:23px;color:#d0d5dd;left:2215.8px;">유지된 크기</span>
<div style="left:708px;top:314px;width:1800px;height:2px;background:#494c50;"></div>
<div style="left:706px;top:1003px;width:1800px;height:2px;background:#494c50;"></div>
<div style="left:706px;top:1005px;width:1800px;height:42px;background:#292a2d;"></div>
<div style="left:706px;top:1046px;width:1800px;height:2px;background:#494c50;"></div>
<div style="left:708px;top:1048px;width:1800px;height:43px;background:#292a2d;"></div>
<div style="left:708px;top:1091px;width:1800px;height:2px;background:#494c50;"></div>
<div style="left:708px;top:1093px;width:1800px;height:500px;background:#1f2024;"></div>
<span class="t" style="top:1007px;font-size:23px;color:#d0d5dd;left:714.03px;transform:scaleX(0.9739);">보관자</span>
<svg style="left:2422px;top:1019px;" width="19" height="16" viewBox="0 0 19 16"><path d="M0 1.5H19M0 8H19M0 14.5H19" stroke="#9aa0a6" stroke-width="2.2"/></svg>
<span class="t" style="top:1051px;font-size:23px;color:#d0d5dd;left:715.78px;transform:scaleX(1.0161);">객체</span>
<span class="t" style="top:1051px;font-size:23px;color:#d0d5dd;left:1854.98px;transform:scaleX(1.0161);">거리</span>
<span class="t" style="top:1051px;font-size:23px;color:#d0d5dd;left:1995.3px;">얕은 크기</span>
<span class="t" style="top:1051px;font-size:23px;color:#d0d5dd;left:2215.8px;">유지된 크기</span>
<div style="left:1846px;top:272px;width:2px;height:731px;background:rgba(110,114,120,.55);"></div>
<div style="left:1846px;top:1048px;width:2px;height:500px;background:rgba(110,114,120,.55);"></div>
<div style="left:1986px;top:272px;width:2px;height:731px;background:rgba(110,114,120,.55);"></div>
<div style="left:1986px;top:1048px;width:2px;height:500px;background:rgba(110,114,120,.55);"></div>
<div style="left:2206px;top:272px;width:2px;height:731px;background:rgba(110,114,120,.55);"></div>
<div style="left:2206px;top:1048px;width:2px;height:500px;background:rgba(110,114,120,.55);"></div>
<div style="left:2449px;top:164px;width:2px;height:1400px;background:#3a3b3f;"></div>
<div style="left:368px;top:1544px;width:2100px;height:2px;background:#505256;"></div>
</div></div>
<div id="rim"></div>
</body></html>
